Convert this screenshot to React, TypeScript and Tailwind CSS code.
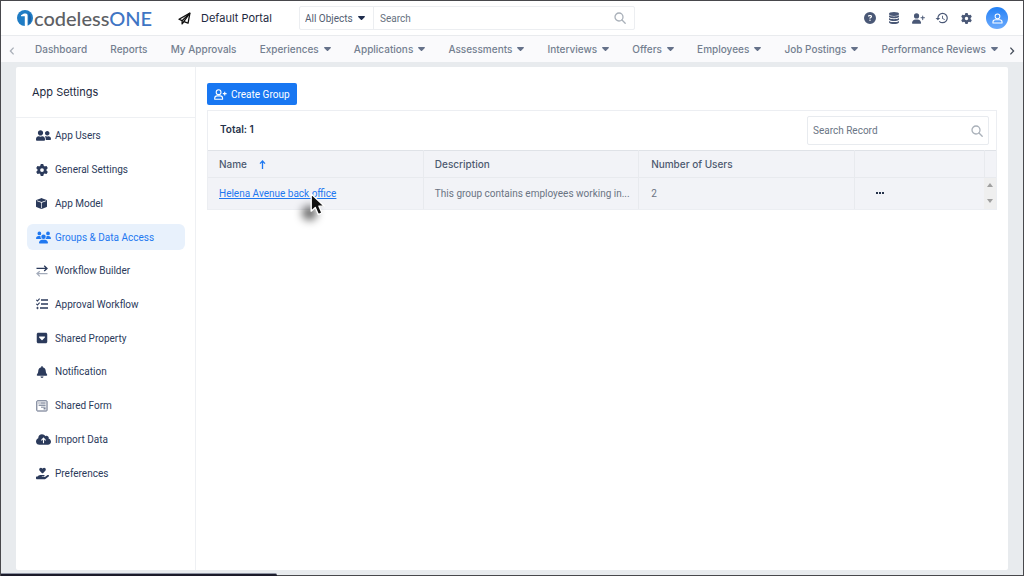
import type { ReactNode } from "react";
import {
  FaBell,
  FaCircleQuestion,
  FaCloudArrowUp,
  FaGear,
  FaHandHoldingHeart,
  FaSquareCaretDown,
  FaUserPlus,
  FaUsers,
} from "react-icons/fa6";
import { FaUserFriends } from "react-icons/fa";
import { BsBoxFill } from "react-icons/bs";
import { MdHistory } from "react-icons/md";

function LogoMark() {
  return (
    <svg viewBox="0 0 16 16" className="size-4" aria-hidden="true">
      <circle cx="8" cy="8" r="8" fill="#1f7cc4" />
      <path d="M4 5.2 L7 3.6 H8.6 C10 3.6 10.6 4.4 10.6 5.6 V16.2 H7.8 V6.2 H4 Z" fill="#fff" />
      <path d="M11.6 2.4 C14.8 5.5 15 11 11.6 14.6 Z" fill="#1c62a8" />
    </svg>
  );
}

function PlaneIcon() {
  return (
    <svg viewBox="0 0 24 24" className="size-[13px]" fill="none" stroke="#111" strokeWidth="2.4" strokeLinejoin="round" strokeLinecap="round" aria-hidden="true">
      <path d="M22 2 L1.8 13.4 L7.6 16 V22 L11 17.6 L18.6 20.6 Z" />
      <path d="M21.4 2.6 L7.6 16" />
      <path d="M21.4 2.6 L11 17.4" />
    </svg>
  );
}

function SearchIcon() {
  return (
    <svg viewBox="0 0 12 12" className="size-3 shrink-0" fill="none" stroke="#a9b0b9" strokeWidth="1.3" strokeLinecap="round" aria-hidden="true">
      <circle cx="5" cy="5" r="4" />
      <path d="M8 8 L11.2 11.2" />
    </svg>
  );
}

function Caret({ className }: { className: string }) {
  return (
    <svg viewBox="0 0 7 4" className={className} aria-hidden="true">
      <path d="M0.8 0 H6.2 C6.9 0 7.2 0.6 6.8 1 L4.1 3.7 C3.8 4.1 3.2 4.1 2.9 3.7 L0.2 1 C-0.2 0.6 0.1 0 0.8 0 Z" fill="currentColor" />
    </svg>
  );
}

function UserOutline({ className }: { className: string }) {
  return (
    <svg viewBox="0 0 12 12" className={className} fill="none" stroke="currentColor" strokeWidth="1.1" strokeLinejoin="round" aria-hidden="true">
      <circle cx="6" cy="3.6" r="2.6" />
      <path d="M1 11 V10 C1 8.4 2.2 7.4 3.8 7.4 H8.2 C9.8 7.4 11 8.4 11 10 V11 Z" />
    </svg>
  );
}

function UserAddOutline() {
  return (
    <svg viewBox="0 0 13 11" className="h-[11px] w-[13px]" fill="none" stroke="currentColor" strokeWidth="1.1" strokeLinejoin="round" aria-hidden="true">
      <circle cx="4.6" cy="3.2" r="2.4" />
      <path d="M0.7 10.2 V9.4 C0.7 7.8 1.8 6.9 3.1 6.9 H6.2 C7.6 6.9 8.6 7.8 8.6 9.4 V10.2 Z" />
      <path d="M8.8 4.6 H12.6 M10.7 2.7 V6.5" />
    </svg>
  );
}

function DatabaseIcon() {
  return (
    <svg viewBox="0 0 10 12" className="h-3 w-[10px]" fill="currentColor" aria-hidden="true">
      <ellipse cx="5" cy="2" rx="5" ry="1.9" />
      <path d="M0 3.3 C1.6 4.9 8.4 4.9 10 3.3 V4.9 C8.4 6.6 1.6 6.6 0 4.9 Z" />
      <path d="M0 6.1 C1.6 7.7 8.4 7.7 10 6.1 V7.7 C8.4 9.4 1.6 9.4 0 7.7 Z" />
      <path d="M0 8.9 C1.6 10.5 8.4 10.5 10 8.9 V10.4 C8.4 12.4 1.6 12.4 0 10.4 Z" />
    </svg>
  );
}

function SwapIcon() {
  return (
    <svg viewBox="0 0 12 12" className="size-3" fill="none" strokeWidth="1.3" aria-hidden="true">
      <path d="M0.5 3.4 H11 M8.2 0.8 L11 3.4 L8.2 6" stroke="#2b3a5b" />
      <path d="M11.5 8.6 H1 M3.8 6.2 L1 8.6 L3.8 11.4" stroke="#a3abba" />
    </svg>
  );
}

function ChecklistIcon() {
  return (
    <svg viewBox="0 0 12 12" className="size-3" fill="none" stroke="#2b3a5b" aria-hidden="true">
      <path d="M5 2 H12 M5 6 H12 M4 10 H12" strokeWidth="1.4" />
      <path d="M0.3 1.8 L1.5 3 L3.6 0.6 M0.3 5.8 L1.5 7 L3.6 4.6" strokeWidth="1.1" />
      <circle cx="1.5" cy="10" r="0.7" fill="#2b3a5b" />
    </svg>
  );
}

function FormIcon() {
  return (
    <svg viewBox="0 0 12 12" className="size-3" fill="none" stroke="#5c6780" strokeWidth="1" aria-hidden="true">
      <rect x="0.8" y="0.8" width="10.2" height="10.2" rx="0.6" />
      <path d="M2.4 3 H3.6 M4.4 3 H9.6 M2.6 5.2 H9.6" />
      <path d="M5 7.2 H9.6" strokeWidth="0.8" />
      <path d="M7.6 8.8 H9.6" strokeWidth="1.2" />
    </svg>
  );
}

function Cursor() {
  return (
    <span className="pointer-events-none absolute top-[5px] left-[91px] block">
      <span className="absolute top-[13px] -left-[8px] block h-[14px] w-[15px] rounded-full bg-black/60 blur-[4px]" />
      <svg viewBox="0 0 15 22" className="relative h-[23px] w-[16px]" aria-hidden="true">
        <path d="M1 1 V17.4 L4.9 13.9 L7.8 20.6 L11.3 19.1 L8.4 12.6 H13.6 Z" fill="#111" stroke="#fff" strokeWidth="1.3" strokeLinejoin="round" />
      </svg>
    </span>
  );
}

const navItems = [
  { label: "Dashboard" },
  { label: "Reports" },
  { label: "My Approvals" },
  { label: "Experiences", menu: true },
  { label: "Applications", menu: true },
  { label: "Assessments", menu: true },
  { label: "Interviews", menu: true },
  { label: "Offers", menu: true },
  { label: "Employees", menu: true },
  { label: "Job Postings", menu: true },
  { label: "Performance Reviews", menu: true },
];

const settings: { label: string; icon: ReactNode; active?: boolean }[] = [
  { label: "App Users", icon: <FaUserFriends className="size-[15px]" /> },
  { label: "General Settings", icon: <FaGear className="size-3" /> },
  { label: "App Model", icon: <BsBoxFill className="size-[11px]" /> },
  { label: "Groups & Data Access", icon: <FaUsers className="size-[15px]" />, active: true },
  { label: "Workflow Builder", icon: <SwapIcon /> },
  { label: "Approval Workflow", icon: <ChecklistIcon /> },
  { label: "Shared Property", icon: <FaSquareCaretDown className="size-3" /> },
  { label: "Notification", icon: <FaBell className="size-3" /> },
  { label: "Shared Form", icon: <FormIcon /> },
  { label: "Import Data", icon: <FaCloudArrowUp className="size-[15px]" /> },
  { label: "Preferences", icon: <FaHandHoldingHeart className="size-[13px]" /> },
];

const tools = [
  { label: "Help", icon: <FaCircleQuestion className="size-3" /> },
  { label: "Data", icon: <DatabaseIcon /> },
  { label: "Invite user", icon: <FaUserPlus className="size-[13px]" /> },
  { label: "History", icon: <MdHistory className="size-[14px]" /> },
  { label: "Settings", icon: <FaGear className="size-[11px]" /> },
];

function Header() {
  return (
    <header className="flex h-[35px] shrink-0 items-center border-b border-[#e9ebee] bg-white pr-[15px] pl-4">
      <a href="#home" className="flex w-[161px] items-center gap-px font-['Lato'] text-[20px] leading-5 text-[#5d6064]">
        <LogoMark />
        <span className="font-medium">
          codeless<span className="text-[#3f75c4]">ONE</span>
        </span>
      </a>
      <a href="#portal" className="flex w-[121px] items-center gap-[10px] text-[11px] text-[#1d2940]">
        <PlaneIcon />
        Default Portal
      </a>
      <div className="flex h-6 w-[336px] items-center rounded-xs border border-[#eceef1] font-['Roboto'] text-[10px]">
        <div className="relative flex h-full w-[74px] items-center border-r border-[#eceef1]">
          <select aria-label="Object type" className="h-full w-full appearance-none bg-transparent pl-[5px] text-[#525e72] outline-none">
            <option>All Objects</option>
          </select>
          <Caret className="pointer-events-none absolute right-2 h-1 w-[7px] text-[#1f2d4d]" />
        </div>
        <input type="search" aria-label="Search" placeholder="Search" className="h-full min-w-0 flex-1 px-[6px] outline-none placeholder:text-[#667180]" />
        <button type="button" aria-label="Run search" className="flex px-2">
          <SearchIcon />
        </button>
      </div>
      <div className="ml-auto flex items-center text-[#4a5876]">
        {tools.map((tool) => (
          <button key={tool.label} type="button" aria-label={tool.label} className="flex w-[24px] justify-center">
            {tool.icon}
          </button>
        ))}
        <button type="button" aria-label="Account" className="ml-2 flex size-[22px] items-center justify-center rounded-full bg-linear-to-b from-[#1f80f5] to-[#6aaafc] text-white">
          <UserOutline className="size-[11px]" />
        </button>
      </div>
    </header>
  );
}

function ChevronSide({ d }: { d: string }) {
  return (
    <svg viewBox="0 0 6 8" className="h-2 w-[6px]" fill="none" stroke="currentColor" strokeWidth="1.3" aria-hidden="true">
      <path d={d} />
    </svg>
  );
}

function Nav() {
  return (
    <nav className="flex h-[26px] shrink-0 items-center bg-[#fafafc] text-[10px] text-[#747f90]">
      <button type="button" aria-label="Scroll left" className="flex w-[34px] shrink-0 pt-1 pl-2 text-[#a9afb8]">
        <ChevronSide d="M4.6 0.6 L1.4 4 L4.6 7.4" />
      </button>
      <ul className="flex min-w-0 flex-1 justify-between whitespace-nowrap">
        {navItems.map((item) => (
          <li key={item.label}>
            <a href="#nav" className="flex items-center gap-[5px] font-medium">
              {item.label}
              {item.menu && <Caret className="h-1 w-[7px] text-[#66728a]" />}
            </a>
          </li>
        ))}
      </ul>
      <button type="button" aria-label="Scroll right" className="flex shrink-0 pt-1 pr-2 pl-[11px] text-[#444c59]">
        <ChevronSide d="M1.4 0.6 L4.6 4 L1.4 7.4" />
      </button>
    </nav>
  );
}

function Sidebar() {
  return (
    <aside className="w-[180px] shrink-0 border-r border-[#eef0f3]">
      <h1 className="flex h-[51px] items-center border-b border-[#eef0f3] pl-4 text-[11px] text-[#1d2940]">App Settings</h1>
      <ul className="mt-px grid h-[371px] auto-rows-fr items-center pr-[10px] pl-[11px] font-['Roboto'] text-[10px]">
        {settings.map((item) => (
          <li key={item.label}>
            <a
              href="#setting"
              className={
                item.active
                  ? "flex h-[26px] items-center rounded-md bg-[#e8f1fc] pl-[9px] text-[#1f78f0]"
                  : "flex h-[26px] items-center pl-[9px] text-[#2b3a5b]"
              }
            >
              <span className="flex w-[19px] shrink-0">{item.icon}</span>
              {item.label}
            </a>
          </li>
        ))}
      </ul>
    </aside>
  );
}

function Groups() {
  return (
    <main className="min-w-0 flex-1 py-4 pr-[11px] pl-[11px]">
      <button type="button" className="flex h-[22px] items-center gap-1 rounded-xs bg-[#1877f2] px-[7px] font-['Roboto'] text-[10px] text-white">
        <UserAddOutline />
        Create Group
      </button>
      <section className="mt-[5px] border border-[#eceef2]">
        <div className="flex h-[39px] items-center justify-between pr-[7px] pl-3">
          <p className="pb-1 text-[10px] leading-4 font-semibold text-[#26334a]">Total: 1</p>
          <div className="flex h-[29px] w-[182px] items-center rounded-xs border border-[#e8ebef] px-[5px]">
            <input type="search" aria-label="Search Record" placeholder="Search Record" className="min-w-0 flex-1 font-['Roboto'] text-[10px] outline-none placeholder:text-[#6a7585]" />
            <SearchIcon />
          </div>
        </div>
        <table className="w-full table-fixed border-collapse bg-[#f2f3f7] text-left text-[10px]">
          <colgroup>
            <col />
            <col />
            <col />
            <col className="w-[130px]" />
            <col className="w-[12px]" />
          </colgroup>
          <thead>
            <tr className="h-[27px] border-t border-[#dfe2e7] text-[#4d5a70]">
              <th scope="col" className="pl-[11px] font-medium">
                <span className="flex items-center gap-3">
                  Name
                  <svg viewBox="0 0 7 9" className="h-[9px] w-[7px]" fill="none" stroke="#1f78f0" strokeWidth="1.3" aria-hidden="true">
                    <path d="M3.5 9 V1.2 M1 3.6 L3.5 1 L6 3.6" />
                  </svg>
                </span>
              </th>
              <th scope="col" className="border-l border-[#e8eaee] pl-[11px] font-medium">Description</th>
              <th scope="col" className="border-l border-[#e8eaee] pl-3 font-medium">Number of Users</th>
              <td className="border-l border-[#e8eaee]" />
              <td className="border-l border-[#e8eaee]" />
            </tr>
          </thead>
          <tbody>
            <tr className="h-[31px] border-t border-[#e8eaee] font-['Roboto'] text-[#6a7483]">
              <td className="pl-[11px]">
                <a href="#group" className="relative text-[#1f78f0] underline">
                  Helena Avenue back office
                  <Cursor />
                </a>
              </td>
              <td className="truncate border-l border-[#e8eaee] pr-1 pl-[11px]">This group contains employees working in...</td>
              <td className="border-l border-[#e8eaee] pl-3">2</td>
              <td className="border-l border-[#e8eaee] pl-[21px]">
                <button type="button" aria-label="Row actions" className="flex gap-px">
                  <span className="size-[2px] bg-[#26334a]" />
                  <span className="size-[2px] bg-[#26334a]" />
                  <span className="size-[2px] bg-[#26334a]" />
                </button>
              </td>
              <td className="bg-[#efefef] p-0">
                <div className="flex h-[30px] flex-col items-center justify-between py-[5px] text-[#a0a0a0]">
                  <button type="button" aria-label="Scroll up" className="flex">
                    <svg viewBox="0 0 6 4" className="h-1 w-[6px]" aria-hidden="true"><path d="M0 4 L3 0 L6 4 Z" fill="currentColor" /></svg>
                  </button>
                  <button type="button" aria-label="Scroll down" className="flex">
                    <svg viewBox="0 0 6 4" className="h-1 w-[6px]" aria-hidden="true"><path d="M0 0 L3 4 L6 0 Z" fill="currentColor" /></svg>
                  </button>
                </div>
              </td>
            </tr>
          </tbody>
        </table>
      </section>
    </main>
  );
}

export default function App() {
  return (
    <div className="relative flex min-h-screen flex-col border border-[#48484c] bg-[#e8ebee] font-['Inter','Liberation_Sans',sans-serif]">
      <Header />
      <Nav />
      <div className="mx-[15px] mt-[5px] mb-[5px] flex flex-1 rounded-xs bg-white">
        <Sidebar />
        <Groups />
      </div>
      <div className="absolute -bottom-px left-0 h-[3px] w-[27%] rounded-tr-xs border-t border-[#8d93a3] bg-[#1b1b2a]" />
    </div>
  );
}
